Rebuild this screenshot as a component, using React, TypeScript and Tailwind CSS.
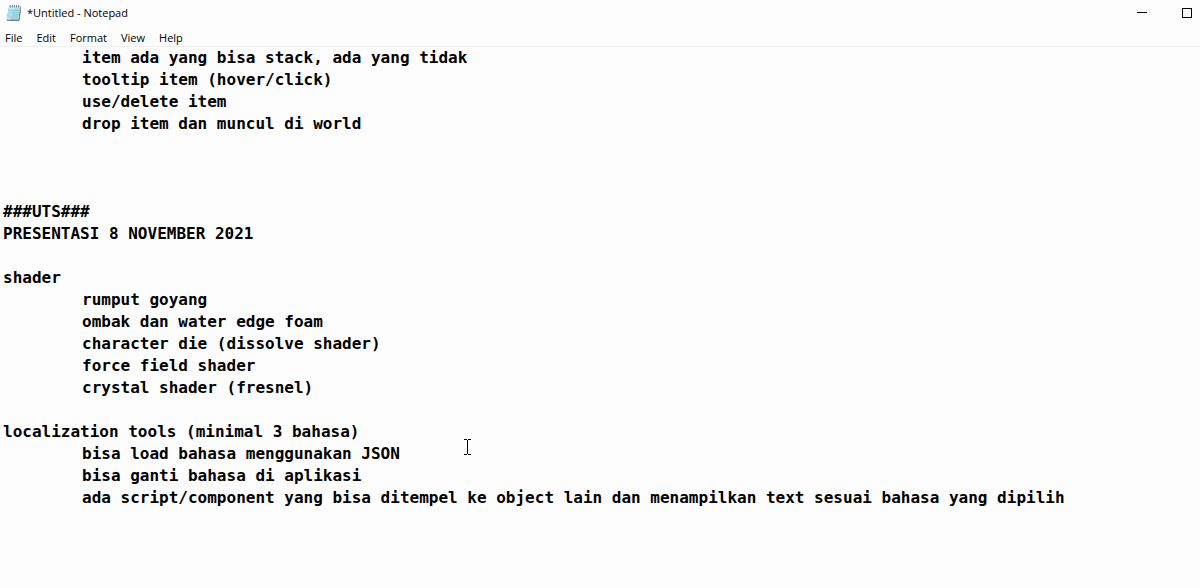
import { useState } from "react";

const NOTE = [
  "\titem ada yang bisa stack, ada yang tidak",
  "\ttooltip item (hover/click)",
  "\tuse/delete item",
  "\tdrop item dan muncul di world",
  "",
  "",
  "",
  "###UTS###",
  "PRESENTASI 8 NOVEMBER 2021",
  "",
  "shader",
  "\trumput goyang",
  "\tombak dan water edge foam",
  "\tcharacter die (dissolve shader)",
  "\tforce field shader",
  "\tcrystal shader (fresnel)",
  "",
  "localization tools (minimal 3 bahasa)",
  "\tbisa load bahasa menggunakan JSON",
  "\tbisa ganti bahasa di aplikasi",
  "\tada script/component yang bisa ditempel ke object lain dan menampilkan text sesuai bahasa yang dipilih",
].join("\n");

const MENUS = ["File", "Edit", "Format", "View", "Help"];

function NotepadIcon() {
  return (
    <svg width="16" height="18" viewBox="0 0 16 18" aria-hidden="true">
      <path d="M3 2.5h12l-1.3 13.2-1.2 1.3H1.2L.6 15.8z" fill="#78838a" />
      <path d="M3.2 2.5h11.3l-1.7 13H.8z" fill="#a9dcea" />
      <path d="M3.2 2.5h6L4.5 15.5H.8z" fill="#c3e9f1" />
      <path d="M2.7 6.5h11M2.3 8.7h11M1.9 10.9h11M1.5 13.1h11" stroke="#78bfd4" strokeWidth=".7" />
      <path d="M3.2 2.5h11.3l-.2 1.6H3z" fill="#d9eef2" />
      <path d="M4.3 1v2.6M6.4 1v2.6M8.5 1v2.6M10.6 1v2.6M12.7 1v2.6" stroke="#68777f" strokeWidth=".9" />
      <path d="M12.8 15.5 14.5 3l.6.2-1.4 12.5-1.2 1.3z" fill="#8c8070" />
    </svg>
  );
}

function TextCursor() {
  return (
    <svg
      className="pointer-events-none absolute top-[392px] left-[464px]"
      width="7"
      height="16"
      viewBox="0 0 7 16"
      shapeRendering="crispEdges"
      aria-hidden="true"
    >
      <path d="M0 .5h3M4 .5h3M3.5 1v14M0 15.5h3M4 15.5h3" stroke="#000" />
    </svg>
  );
}

export default function App() {
  const [text, setText] = useState(NOTE);
  return (
    <div className="flex h-screen flex-col overflow-hidden bg-[#fdfdfd] font-['Open_Sans','Noto_Sans',sans-serif] text-[11px] text-black">
      <header className="flex h-[26px] shrink-0 items-center pl-1.5">
        <NotepadIcon />
        <h1 className="ml-[5px] flex-1">*Untitled - Notepad</h1>
        <button type="button" aria-label="Minimize" className="flex h-full w-[46px] items-center justify-center">
          <svg width="10" height="10" viewBox="0 0 10 10" shapeRendering="crispEdges">
            <path d="M0 4.5h10" stroke="#000" />
          </svg>
        </button>
        <button type="button" aria-label="Maximize" className="flex h-full w-[35px] items-center justify-end pr-2">
          <svg width="10" height="10" viewBox="0 0 10 10" shapeRendering="crispEdges">
            <path d="M.5.5h9v9h-9z" fill="none" stroke="#000" />
          </svg>
        </button>
      </header>
      <nav aria-label="Menu bar" className="flex h-[21px] shrink-0 items-center gap-[14px] border-b border-[#f0f0f0] pt-1 pl-[5px]">
        {MENUS.map((m) => (
          <button key={m} type="button">
            {m}
          </button>
        ))}
      </nav>
      <main className="relative flex min-h-0 flex-1">
        <textarea
          aria-label="Text editor"
          value={text}
          onChange={(e) => setText(e.target.value)}
          spellCheck={false}
          wrap="off"
          className="w-full resize-none overflow-hidden border-0 bg-transparent pl-[3px] font-['DejaVu_Sans_Mono',monospace] text-base leading-[22px] font-bold [tab-size:79px] outline-none"
        />
        <TextCursor />
      </main>
    </div>
  );
}
